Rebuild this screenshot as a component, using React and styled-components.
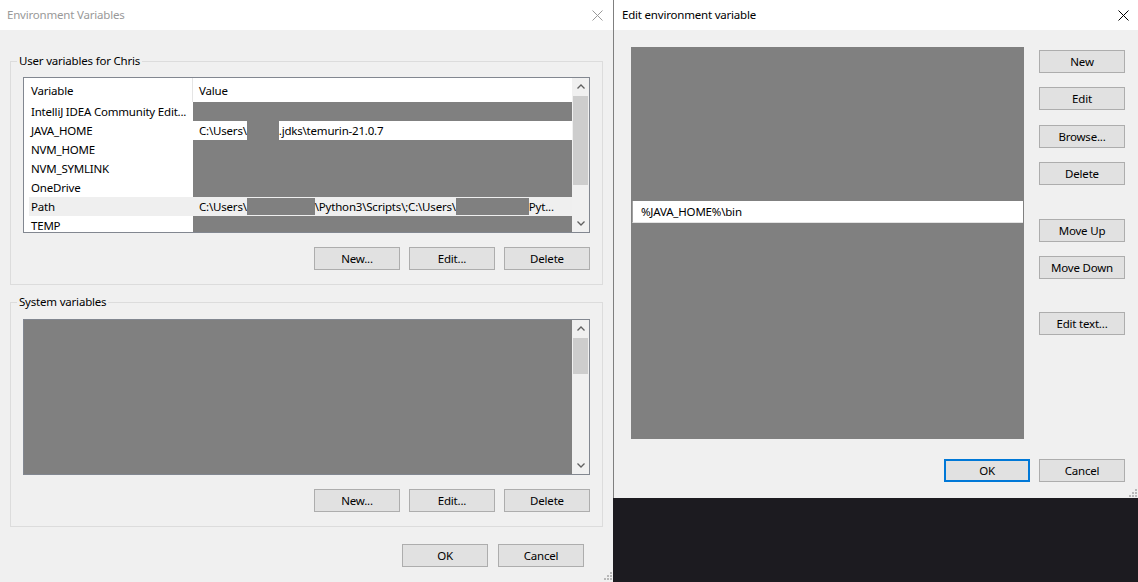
import React from 'react';
import styled, { createGlobalStyle } from 'styled-components';

const GlobalStyle = createGlobalStyle`
  html, body {
    margin: 0;
    padding: 0;
  }
  body {
    width: 1138px;
    height: 582px;
    overflow: hidden;
    background: #1c1b20;
    font-family: "Noto Sans", "Segoe UI", sans-serif;
    font-size: 11.5px;
    letter-spacing: -0.2px;
    color: #000;
  }
`;

const Desktop = styled.div`
  display: flex;
  width: 1138px;
  height: 582px;
  overflow: hidden;
`;

const Window = styled.div`
  position: relative;
  flex: none;
  width: ${p => p.$width}px;
  height: ${p => p.$height}px;
  display: flex;
  flex-direction: column;
  background: #f0f0f0;
  box-sizing: border-box;
  border-left: ${p => (p.$edge ? '1px solid #7f7f7f' : 'none')};
`;

const RightColumn = styled.div`
  flex: 1;
  display: flex;
  flex-direction: column;
`;

const DarkFill = styled.div`
  flex: 1;
  background: #1c1b20;
`;

const TitleBar = styled.div`
  height: 30px;
  flex: 0 0 30px;
  display: flex;
  align-items: center;
  justify-content: space-between;
  padding: 0 ${p => p.$padRight}px 0 ${p => p.$padLeft}px;
  background: #fff;
  box-sizing: border-box;
`;

const Title = styled.span`
  color: ${p => (p.$active ? '#000' : '#999')};
  line-height: 16px;
`;

const Group = styled.div`
  position: relative;
  margin: ${p => p.$top}px 10px 0 10px;
  padding: ${p => p.$padTop}px 12px 14px 12px;
  border: 1px solid #dcdcdc;
  display: flex;
  flex-direction: column;
  gap: 14px;
`;

const Legend = styled.span`
  position: absolute;
  top: -9px;
  left: 6px;
  padding: 0 2px;
  line-height: 16px;
  background: #f0f0f0;
`;

const ListView = styled.div`
  height: 156px;
  display: flex;
  border: 1px solid #828790;
  background: #fff;
  box-sizing: border-box;
`;

const ListBody = styled.div`
  flex: 1;
  overflow: hidden;
  background: ${p => (p.$redacted ? '#808080' : '#fff')};
`;

const Header = styled.div`
  height: 24px;
  display: flex;
  align-items: center;
`;

const HeaderCell = styled.div`
  height: 100%;
  display: flex;
  align-items: center;
  width: ${p => (p.$width ? `${p.$width}px` : 'auto')};
  flex: ${p => (p.$width ? 'none' : 1)};
  padding-left: ${p => p.$pad}px;
  box-sizing: border-box;
  border-right: ${p => (p.$divider ? '1px solid #e5e5e5' : 'none')};
`;

const Row = styled.div`
  height: 19px;
  display: flex;
  margin-left: 5px;
  background: ${p => (p.$selected ? '#efefef' : 'transparent')};
`;

const NameCell = styled.div`
  width: 164px;
  padding-left: 2px;
  box-sizing: border-box;
  line-height: 19px;
  white-space: nowrap;
`;

const ValueCell = styled.div`
  flex: 1;
  padding-left: 6px;
  line-height: 19px;
  white-space: nowrap;
  overflow: hidden;
  display: flex;
  align-items: center;
  background: ${p => (p.$redact ? '#808080' : 'transparent')};
`;

const Blot = styled.span`
  display: block;
  align-self: ${p => (p.$full ? 'stretch' : 'center')};
  width: ${p => p.$w}px;
  height: ${p => (p.$full ? 'auto' : '17px')};
  background-color: #808080;
  flex: none;
`;

const ScrollBar = styled.div`
  width: 17px;
  flex: none;
  display: flex;
  flex-direction: column;
  background: #f0f0f0;
`;

const Arrow = styled.div`
  height: 17px;
  flex: none;
  display: flex;
  align-items: center;
  justify-content: center;
`;

const Track = styled.div`
  flex: 1;
  display: flex;
  justify-content: center;
`;

const Thumb = styled.div`
  width: 15px;
  height: ${p => p.$h}px;
  margin-top: 1px;
  background: #cdcdcd;
`;

const ButtonRow = styled.div`
  display: flex;
  justify-content: flex-end;
  gap: ${p => p.$gap || 9}px;
  padding-right: ${p => p.$padRight || 0}px;
  margin-top: ${p => p.$top || 0}px;
`;

const Button = styled.button`
  width: 86px;
  height: 23px;
  flex: none;
  margin-top: ${p => p.$top || 0}px;
  padding: 0;
  font-family: inherit;
  font-size: 11.5px;
  letter-spacing: -0.2px;
  color: #000;
  background: #e1e1e1;
  border: ${p => (p.$default ? '2px solid #0078d7' : '1px solid #adadad')};
  box-sizing: border-box;
`;

const Grip = styled.svg`
  position: absolute;
  right: ${p => p.$right}px;
  bottom: ${p => p.$bottom}px;
`;

const EditBody = styled.div`
  display: flex;
  padding: 17px 13px 0 17px;
`;

const EntryList = styled.div`
  width: 393px;
  height: 392px;
  flex: none;
  padding-top: 154px;
  box-sizing: border-box;
  background: #808080;
`;

const Entry = styled.div`
  width: 391px;
  height: 22px;
  margin-left: 1px;
  padding-left: 8px;
  box-sizing: border-box;
  display: flex;
  align-items: center;
  background: #fff;
  border-left: 1px solid #a0a0a0;
  border-bottom: 1px solid #e3e3e3;
`;

const ButtonColumn = styled.div`
  display: flex;
  flex-direction: column;
  margin-left: 15px;
`;

const CloseIcon = ({ color }) => (
  <svg width="11" height="11" viewBox="0 0 11 11">
    <path d="M0.5 0.5 L10.5 10.5 M10.5 0.5 L0.5 10.5" stroke={color} strokeWidth="1" fill="none" />
  </svg>
);

const Chevron = ({ down }) => (
  <svg width="8" height="5" viewBox="0 0 8 5">
    <path
      d={down ? 'M0.5 0.5 L4 4 L7.5 0.5' : 'M0.5 4.5 L4 1 L7.5 4.5'}
      stroke="#606060"
      strokeWidth="1.3"
      fill="none"
    />
  </svg>
);

const GripDots = ({ right, bottom }) => (
  <Grip $right={right} $bottom={bottom} width="8" height="8" viewBox="0 0 8 8">
    {[[6, 0], [6, 3], [3, 3], [6, 6], [3, 6], [0, 6]].map(([x, y]) => (
      <rect key={`${x}-${y}`} x={x} y={y} width="2" height="2" fill="#b8b8b8" />
    ))}
  </Grip>
);

const Scroller = ({ thumb }) => (
  <ScrollBar>
    <Arrow><Chevron /></Arrow>
    <Track><Thumb $h={thumb} /></Track>
    <Arrow><Chevron down /></Arrow>
  </ScrollBar>
);

const userVars = [
  { name: 'IntelliJ IDEA Community Edit...', redact: true },
  {
    name: 'JAVA_HOME',
    value: (
      <>
        <span>C:\Users\</span>
        <Blot $w={32} $full />
        <span>.jdks\temurin-21.0.7</span>
      </>
    ),
  },
  { name: 'NVM_HOME', redact: true },
  { name: 'NVM_SYMLINK', redact: true },
  { name: 'OneDrive', redact: true },
  {
    name: 'Path',
    selected: true,
    value: (
      <>
        <span>C:\Users\</span>
        <Blot $w={68} />
        <span>\Python3\Scripts\;C:\Users\</span>
        <Blot $w={73} />
        <span>Pyt...</span>
      </>
    ),
  },
  { name: 'TEMP', redact: true },
];

export default function App() {
  return (
    <>
      <GlobalStyle />
      <Desktop>
        <Window $width={613} $height={582}>
          <TitleBar $padLeft={7} $padRight={10}>
            <Title>Environment Variables</Title>
            <CloseIcon color="#999" />
          </TitleBar>

          <Group $top={31} $padTop={15}>
            <Legend>User variables for Chris</Legend>
            <ListView>
              <ListBody>
                <Header>
                  <HeaderCell $width={169} $pad={7} $divider>Variable</HeaderCell>
                  <HeaderCell $pad={6}>Value</HeaderCell>
                </Header>
                {userVars.map(v => (
                  <Row key={v.name} $selected={v.selected}>
                    <NameCell>{v.name}</NameCell>
                    <ValueCell $redact={v.redact}>{v.value}</ValueCell>
                  </Row>
                ))}
              </ListBody>
              <Scroller thumb={89} />
            </ListView>
            <ButtonRow>
              <Button>New...</Button>
              <Button>Edit...</Button>
              <Button>Delete</Button>
            </ButtonRow>
          </Group>

          <Group $top={17} $padTop={16}>
            <Legend>System variables</Legend>
            <ListView>
              <ListBody $redacted />
              <Scroller thumb={36} />
            </ListView>
            <ButtonRow>
              <Button>New...</Button>
              <Button>Edit...</Button>
              <Button>Delete</Button>
            </ButtonRow>
          </Group>

          <ButtonRow $top={17} $gap={10} $padRight={29}>
            <Button>OK</Button>
            <Button>Cancel</Button>
          </ButtonRow>
          <GripDots right={1} bottom={2} />
        </Window>

        <RightColumn>
          <Window $width={525} $height={498} $edge>
            <TitleBar $padLeft={8} $padRight={9}>
              <Title $active>Edit environment variable</Title>
              <CloseIcon color="#000" />
            </TitleBar>
            <EditBody>
              <EntryList>
                <Entry>%JAVA_HOME%\bin</Entry>
              </EntryList>
              <ButtonColumn>
                <Button $top={3}>New</Button>
                <Button $top={14}>Edit</Button>
                <Button $top={15}>Browse...</Button>
                <Button $top={14}>Delete</Button>
                <Button $top={34}>Move Up</Button>
                <Button $top={14}>Move Down</Button>
                <Button $top={33}>Edit text...</Button>
              </ButtonColumn>
            </EditBody>
            <ButtonRow $top={20} $gap={9} $padRight={13}>
              <Button $default>OK</Button>
              <Button>Cancel</Button>
            </ButtonRow>
            <GripDots right={1} bottom={1} />
          </Window>
          <DarkFill />
        </RightColumn>
      </Desktop>
    </>
  );
}
